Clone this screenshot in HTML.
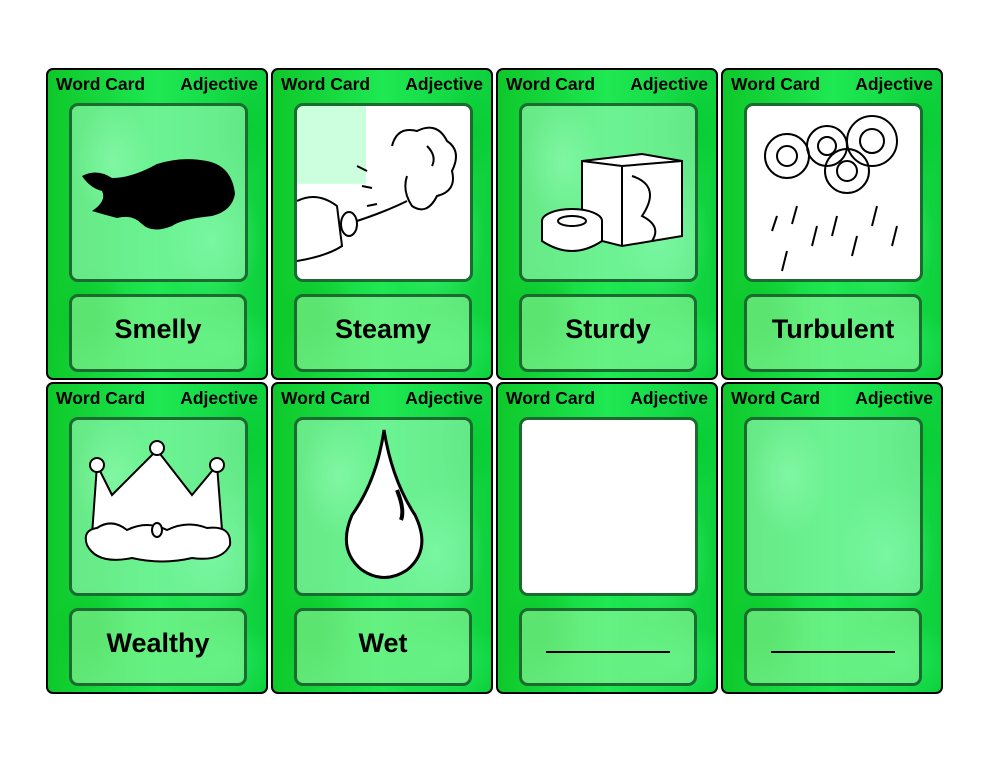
<!DOCTYPE html>
<html><head><meta charset="utf-8"><style>
html,body{margin:0;padding:0;background:#fff;width:990px;height:765px;overflow:hidden;font-family:"Liberation Sans",Arial,sans-serif}
.card{position:absolute;width:222px;height:312px;border:2px solid #000;border-radius:7px;box-sizing:border-box;overflow:hidden;
background:
radial-gradient(ellipse 40px 60px at 30% 30%,rgba(120,255,160,.6),transparent),
radial-gradient(ellipse 50px 70px at 75% 55%,rgba(90,255,150,.6),transparent),
radial-gradient(ellipse 40px 50px at 20% 80%,rgba(0,190,30,.6),transparent),
radial-gradient(ellipse 60px 40px at 80% 90%,rgba(40,240,110,.6),transparent),
radial-gradient(ellipse 30px 50px at 90% 20%,rgba(0,200,40,.6),transparent),
linear-gradient(90deg,#0ec82a,#1ee852 50%,#0ed03c);}
.hd{position:absolute;top:4px;left:8px;right:8px;font-weight:bold;font-size:17.5px;display:flex;justify-content:space-between;color:#000}
.img{position:absolute;left:21px;top:33px;width:179px;height:179px;box-sizing:border-box;border:3px solid #1b6a30;border-radius:9px;background:rgba(160,250,190,.6);overflow:hidden}
.lab{position:absolute;left:21px;top:224px;width:178px;height:78px;box-sizing:border-box;border:3px solid #1b6a30;border-radius:9px;background:rgba(160,250,170,.55);font-weight:bold;font-size:27px;text-align:center;line-height:64px;color:#000}
.wh{background:#fff}
.line{display:inline-block;width:124px;border-bottom:2px solid #000;height:40px;vertical-align:top}
svg{position:absolute;left:0;top:0}
</style></head><body>
<div class="card" style="left:46px;top:68px"><div class="hd"><span>Word Card</span><span>Adjective</span></div>
<div class="img"><svg width="173" height="173"><path d="M10 70 Q25 62 40 72 Q60 72 85 58 Q110 50 135 55 Q160 60 163 88 Q160 105 140 110 Q110 113 100 120 Q80 128 70 118 Q60 108 45 112 Q30 108 20 105 Q35 95 30 85 Q18 82 10 70Z" fill="#000"/></svg></div>
<div class="lab">Smelly</div></div>
<div class="card" style="left:271px;top:68px"><div class="hd"><span>Word Card</span><span>Adjective</span></div>
<div class="img wh" style="background:linear-gradient(rgba(170,255,200,.6),rgba(170,255,200,.6)) 0 0/40% 45% no-repeat,#fff"><svg width="173" height="173" fill="none" stroke="#000" stroke-width="2"><path d="M0 95 Q20 85 40 100 L45 140 Q30 150 0 155"/><ellipse cx="52" cy="118" rx="8" ry="12"/><path d="M60 115 Q90 105 110 95"/><path d="M95 40 Q100 20 120 25 Q140 15 150 35 Q165 45 155 65 Q160 85 140 90 Q130 110 115 100 Q105 85 110 70"/><path d="M130 40 Q140 50 135 60"/><path d="M60 60 L70 65 M65 80 L75 82 M70 100 L80 98"/></svg></div>
<div class="lab">Steamy</div></div>
<div class="card" style="left:496px;top:68px"><div class="hd"><span>Word Card</span><span>Adjective</span></div>
<div class="img"><svg width="173" height="173" fill="#fff" stroke="#000" stroke-width="2"><path d="M60 55 L120 48 L160 55 L160 130 L100 140 L60 130Z"/><path d="M100 60 L100 140 M60 55 L100 60 L160 55"/><path d="M110 70 Q140 80 120 110 Q140 120 130 135" fill="none"/><ellipse cx="50" cy="115" rx="30" ry="12"/><path d="M20 115 L20 135 Q50 155 80 135 L80 115"/><ellipse cx="50" cy="115" rx="14" ry="5" fill="none"/></svg></div>
<div class="lab">Sturdy</div></div>
<div class="card" style="left:721px;top:68px"><div class="hd"><span>Word Card</span><span>Adjective</span></div>
<div class="img wh"><svg width="173" height="173" fill="none" stroke="#000" stroke-width="2"><circle cx="40" cy="50" r="22"/><circle cx="40" cy="50" r="10"/><circle cx="80" cy="40" r="20"/><circle cx="80" cy="40" r="9"/><circle cx="125" cy="35" r="25"/><circle cx="125" cy="35" r="12"/><circle cx="100" cy="65" r="22"/><circle cx="100" cy="65" r="10"/><path d="M30 110 L25 125 M50 100 L45 118 M70 120 L65 140 M90 110 L85 130 M110 130 L105 150 M130 100 L125 120 M40 145 L35 165 M150 120 L145 140"/></svg></div>
<div class="lab">Turbulent</div></div>

<div class="card" style="left:46px;top:382px"><div class="hd"><span>Word Card</span><span>Adjective</span></div>
<div class="img"><svg width="173" height="173" fill="#fff" stroke="#000" stroke-width="2"><path d="M25 45 L40 75 L85 30 L120 75 L145 45 L150 110 L20 115Z"/><circle cx="25" cy="45" r="7"/><circle cx="85" cy="28" r="7"/><circle cx="145" cy="45" r="7"/><path d="M15 125 Q10 110 25 108 Q40 98 55 110 Q75 100 95 110 Q115 100 135 108 Q160 105 158 125 Q150 142 120 138 Q90 145 60 138 Q25 145 15 125Z"/><ellipse cx="85" cy="110" rx="5" ry="7"/></svg></div>
<div class="lab">Wealthy</div></div>
<div class="card" style="left:271px;top:382px"><div class="hd"><span>Word Card</span><span>Adjective</span></div>
<div class="img"><svg width="173" height="173" fill="#fff" stroke="#000" stroke-width="3"><path d="M87 10 Q80 60 55 95 Q40 130 65 150 Q87 165 110 150 Q135 130 118 95 Q95 60 87 10Z"/><path d="M100 70 Q108 90 104 100" fill="none" stroke-width="4"/></svg></div>
<div class="lab">Wet</div></div>
<div class="card" style="left:496px;top:382px"><div class="hd"><span>Word Card</span><span>Adjective</span></div>
<div class="img wh"></div>
<div class="lab"><span class="line"></span></div></div>
<div class="card" style="left:721px;top:382px"><div class="hd"><span>Word Card</span><span>Adjective</span></div>
<div class="img"></div>
<div class="lab"><span class="line"></span></div></div>
</body></html>
